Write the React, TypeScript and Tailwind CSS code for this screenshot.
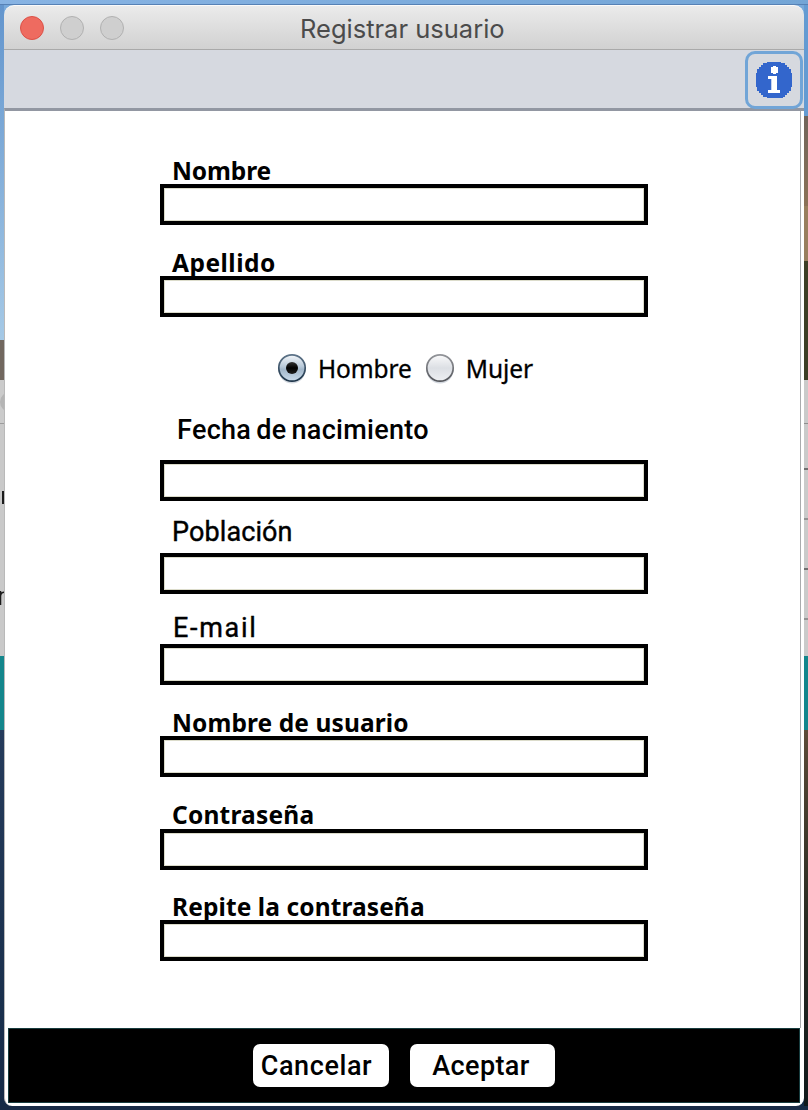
import { useState } from 'react';

type FieldProps = { id: string; label: string; row: string; text: string; type?: string };

const NOTO = 'pl-3 font-bold text-[24.500px] leading-[30px] font-["Noto_Sans",sans-serif]';

function Field({ id, label, row, text, type = 'text' }: FieldProps) {
  return (
    <div className={`flex flex-col ${row}`}>
      <label htmlFor={id} className={`h-7 whitespace-nowrap ${text}`}>{label}</label>
      <input
        id={id}
        type={type}
        className="h-[41px] w-[488px] border-4 border-black bg-white px-2 text-xl shadow-[inset_0_0_0_1px_#dcdccb] outline-none"
      />
    </div>
  );
}

function Radio({ checked, label, onSelect }: { checked: boolean; label: string; onSelect: () => void }) {
  return (
    <button role="radio" aria-checked={checked} onClick={onSelect} className="flex h-8 items-start">
      <svg width="30" height="32" viewBox="0 0 30 32">
        <defs>
          <linearGradient id="radio-on" x1="0" y1="0" x2="0" y2="1">
            <stop offset="0" stopColor="#f4f7fa" />
            <stop offset=".45" stopColor="#b7c8d8" />
            <stop offset=".55" stopColor="#a2b7ca" />
            <stop offset="1" stopColor="#cbdcec" />
          </linearGradient>
          <linearGradient id="radio-off" x1="0" y1="0" x2="0" y2="1">
            <stop offset="0" stopColor="#fafafb" />
            <stop offset=".5" stopColor="#dcdfe4" />
            <stop offset="1" stopColor="#eef0f3" />
          </linearGradient>
          <linearGradient id="ring-on" x1="0" y1="0" x2="0" y2="1">
            <stop offset="0" stopColor="#5d7388" />
            <stop offset="1" stopColor="#1d3448" />
          </linearGradient>
          <linearGradient id="ring-off" x1="0" y1="0" x2="0" y2="1">
            <stop offset="0" stopColor="#929499" />
            <stop offset="1" stopColor="#54565b" />
          </linearGradient>
          <linearGradient id="dot" x1="0" y1="0" x2="0" y2="1">
            <stop offset="0" stopColor="#333" />
            <stop offset=".5" stopColor="#000" />
            <stop offset="1" stopColor="#202020" />
          </linearGradient>
        </defs>
        <circle cx="15" cy="16.8" r="13.6" fill="#d3d8df" />
        <circle cx="15" cy="15" r="13.2" fill={checked ? 'url(#radio-on)' : 'url(#radio-off)'} stroke={checked ? 'url(#ring-on)' : 'url(#ring-off)'} strokeWidth="1.7" />
        {checked && <circle cx="15" cy="15" r="6" fill="url(#dot)" />}
      </svg>
      <span className="mt-0.5 ml-[11px] text-[24.500px] leading-7 tracking-[-0.1px] font-['Noto_Sans',sans-serif] [-webkit-text-stroke:0.3px_black]">{label}</span>
    </button>
  );
}

function InfoIcon() {
  return (
    <svg className="-mt-px" width="38" height="38" viewBox="0 0 19 19" shapeRendering="crispEdges">
      <path
        fill="#3366cc"
        d="M6 0.5h7v.5h2v1h1v1h1v1h1v2h.5v7H18v2h-1v1h-1v1h-1v1h-1v.5H6V18H4v-1H3v-1H2v-1H1v-2H.5V6H1V4h1V3h1V2h1V1h2z"
      />
      <path fill="#fff" d="M8 3h1v-.5h1.500V3h1v3h-1v.5H9V6H8zM6.500 7.500H11v7h1.500V16h-6v-1.500H8V9H6.500z" />
      <path fill="#c4d2f0" d="M8 9h.5v5.500H8z" />
    </svg>
  );
}

function LeftDesktop() {
  return (
    <div className="flex w-1 shrink-0 flex-col overflow-hidden bg-[#182d49]">
      <div className="h-[335px] bg-linear-to-b from-[#6395cd] to-[#a5c9e6]" />
      <div className="h-10 bg-[#71675f]" />
      <div className="flex h-11 flex-col justify-center border-b border-[#9c9c9c] bg-[#cbcbcb]">
        <div className="h-5 w-5 rounded-full bg-[#b5b5b5]" />
      </div>
      <div className="flex h-[232px] flex-col bg-[#c9c9c9] pt-[67px]">
        <div className="ml-0.5 h-[13px] w-0.5 bg-[#1b1b1b]" />
        <svg className="mt-[87px]" width="4" height="14" viewBox="0 0 4 14">
          <path d="M0.500 14V0M0.500 5Q1 1.200 4 1.200" fill="none" stroke="#1b1b1b" strokeWidth="1.500" />
        </svg>
      </div>
      <div className="h-[74px] bg-[#13868c]" />
      <div className="grow bg-linear-to-b from-[#253b5b] to-[#152b47]" />
    </div>
  );
}

function RightDesktop() {
  return (
    <div className="flex w-1 shrink-0 flex-col overflow-hidden">
      <div className="h-[111px] bg-[#649bd2]" />
      <div className="h-[90px] bg-linear-to-b from-[#70645b] to-[#8b7157]" />
      <div className="h-[55px] bg-[#987e5d]" />
      <div className="h-[119px] bg-[#3d3e25]" />
      <div className="h-[44px] border-b border-[#8f8f8f] bg-[#cacaca]" />
      <div className="h-[46px] border-b-2 border-[#707070] bg-[#cacaca]" />
      <div className="h-[50px] border-b-2 border-[#939393] bg-[#cacaca]" />
      <div className="h-[50px] border-b-2 border-[#707070] bg-[#cacaca]" />
      <div className="h-[50px] border-b-2 border-[#939393] bg-[#cacaca]" />
      <div className="h-9 bg-[#cacaca]" />
      <div className="h-[74px] bg-[#13868c]" />
      <div className="grow bg-linear-to-b from-[#5c4a38] via-[#292b22] to-[#10191b]" />
    </div>
  );
}

export default function App() {
  const [gender, setGender] = useState('Hombre');
  return (
    <div className="flex h-[1110px] w-[808px] flex-col overflow-hidden bg-[#172b46] text-black">
      <div className="h-[5px] shrink-0 border-b border-[#5681b5] bg-linear-to-r from-[#87b3e3] to-[#73a5d6]" />
      <div className="flex h-[1101px] shrink-0">
        <LeftDesktop />
        <div className="flex w-[800px] flex-col bg-linear-to-b from-[#78a9da] from-5% to-[#152b47] to-6%">
          <header className="flex h-[45px] shrink-0 items-center rounded-t-[10px] border-t border-b border-t-[#fafafa] border-b-[#a9a9a9] bg-linear-to-b from-[#ebebeb] to-[#d1d1d1] pl-4">
            <div className="flex gap-4">
              <span className="h-6 w-6 rounded-full border border-[#dc5147] bg-[#ee6b60]" />
              <span className="h-6 w-6 rounded-full border border-[#b1b1b1] bg-[#cfcfcf]" />
              <span className="h-6 w-6 rounded-full border border-[#b1b1b1] bg-[#cfcfcf]" />
            </div>
            <h1 className="ml-[176px] pt-0.5 text-[25.500px] leading-8 text-[#4b4b4b] font-['Inter',sans-serif]">Registrar usuario</h1>
          </header>
          <div className="flex h-[58px] shrink-0 items-start justify-end bg-[#d6d9e0] pt-px pr-px">
            <button aria-label="Información" className="z-10 flex h-[58px] w-[58px] items-center justify-center rounded-[10px] border-[3.500px] border-[#71a5d7] bg-[#d6d9df]">
              <InfoIcon />
            </button>
          </div>
          <div className="flex h-[998px] shrink-0 flex-col overflow-hidden rounded-b-[8px] border-t-[3px] border-l border-t-[#9297a2] border-l-[#b9b9b9] bg-white pr-[3px]">
            <main className="flex h-[917px] shrink-0 flex-col border-r border-[#a9abad] pt-[45px] pl-[155px]">
              <Field id="nombre" label="Nombre" row="" text={`${NOTO} tracking-[-0.1px]`} />
              <Field id="apellido" label="Apellido" row="mt-[23px]" text={`${NOTO} tracking-[0.5px]`} />
              <div role="radiogroup" className="mt-9 ml-[117px] flex h-[29px] gap-[13px]">
                <Radio checked={gender === 'Hombre'} label="Hombre" onSelect={() => setGender('Hombre')} />
                <Radio checked={gender === 'Mujer'} label="Mujer" onSelect={() => setGender('Mujer')} />
              </div>
              <Field id="fecha" label="Fecha de nacimiento" row="mt-[34px] gap-4" text="pl-[17px] leading-7 text-[27px] font-medium tracking-[0.300px] [word-spacing:-2px] font-['Roboto',sans-serif]" />
              <Field id="poblacion" label="Población" row="mt-[17px] gap-[7px]" text="pl-3 leading-7 text-[27px] tracking-[0.1px] font-['Roboto',sans-serif] [-webkit-text-stroke:0.4px_black]" />
              <Field id="email" label="E-mail" row="mt-5 gap-0.5" type="email" text="pl-[13px] leading-7 text-[27px] tracking-[1.700px] font-['Roboto',sans-serif] [-webkit-text-stroke:0.4px_black]" />
              <Field id="usuario" label="Nombre de usuario" row="mt-[23px]" text={`${NOTO} tracking-[0.1px]`} />
              <Field id="clave" label="Contraseña" row="mt-[23px] gap-px" type="password" text={`${NOTO} tracking-[0.2px]`} />
              <Field id="clave2" label="Repite la contraseña" row="mt-[22px]" type="password" text={`${NOTO} tracking-[0.1px]`} />
            </main>
            <footer className="-mr-px ml-[3px] flex h-[75px] w-[792px] shrink-0 gap-[21px] border border-[#173c3e] bg-black pt-[15px] pl-[244px] text-[27px] font-medium font-['Roboto',sans-serif]">
              <button className="h-[43px] w-[136px] rounded-[7px] bg-white pt-px pr-[9px] leading-[43px] tracking-[0.6px]">Cancelar</button>
              <button className="h-[43px] w-[145px] rounded-[7px] bg-white pt-px pr-[3px] leading-[43px] tracking-[0.4px]">Aceptar</button>
            </footer>
          </div>
        </div>
        <RightDesktop />
      </div>
    </div>
  );
}
